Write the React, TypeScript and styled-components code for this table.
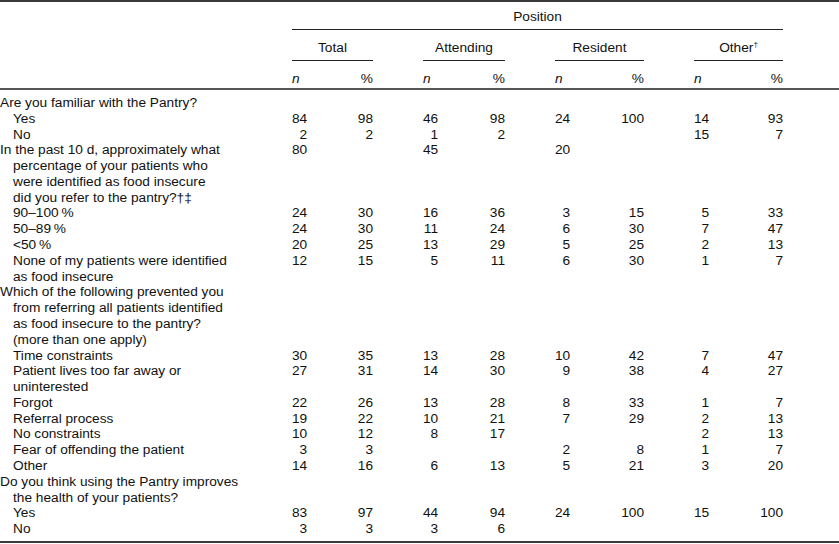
import React from "react";
import styled, { createGlobalStyle } from "styled-components";

const Global = createGlobalStyle`
  html, body { margin: 0; padding: 0; background: #fff; }
  body {
    font-family: "Liberation Sans", Arial, sans-serif;
    font-size: 13.7px;
    color: #111;
  }
`;

const COLS = "292px 81px 50px 82px 50px 89px 50px 89px 1fr";

const Table = styled.div`
  width: 839px;
  border-top: 2px solid #3a3a3a;
  border-bottom: 2px solid #3a3a3a;
  box-sizing: border-box;
`;

const Head = styled.div`
  border-bottom: 2px solid #555;
`;

const HeadRow = styled.div<{ $pt: number; $pb: number }>`
  display: grid;
  grid-template-columns: ${COLS};
  line-height: 16px;
  & > * {
    padding-top: ${(p) => p.$pt}px;
    padding-bottom: ${(p) => p.$pb}px;
  }
`;

const SpanCell = styled.div<{ $from: number; $to: number; $rule?: boolean }>`
  grid-column: ${(p) => p.$from} / ${(p) => p.$to};
  text-align: center;
  border-bottom: ${(p) => (p.$rule ? "1px solid #222" : "none")};
`;

const SubHead = styled.div`
  display: flex;
  justify-content: space-between;
`;

const Italic = styled.span`
  font-style: italic;
`;

const Sup = styled.sup`
  font-size: 8px;
  line-height: 0;
  vertical-align: 5px;
`;

const Body = styled.div`
  padding: 5px 0 4px;
`;

const Row = styled.div`
  display: grid;
  grid-template-columns: ${COLS};
  line-height: 15.78px;
`;

const Label = styled.div``;

const Line = styled.div<{ $indent: boolean }>`
  padding-left: ${(p) => (p.$indent ? 13 : 0)}px;
  white-space: nowrap;
`;

const Group = styled.div`
  display: grid;
  grid-template-columns: 15px 1fr;
`;

const Num = styled.div`
  text-align: right;
  white-space: nowrap;
`;

type V = [string, string];
type R = { kind: "q" | "s"; lines: string[]; v?: V[] };

const rows: R[] = [
  { kind: "q", lines: ["Are you familiar with the Pantry?"] },
  { kind: "s", lines: ["Yes"], v: [["84", "98"], ["46", "98"], ["24", "100"], ["14", "93"]] },
  { kind: "s", lines: ["No"], v: [["2", "2"], ["1", "2"], ["", ""], ["15", "7"]] },
  {
    kind: "q",
    lines: [
      "In the past 10 d, approximately what",
      "percentage of your patients who",
      "were identified as food insecure",
      "did you refer to the pantry?†‡",
    ],
    v: [["80", ""], ["45", ""], ["20", ""], ["", ""]],
  },
  { kind: "s", lines: ["90–100\u2009%"], v: [["24", "30"], ["16", "36"], ["3", "15"], ["5", "33"]] },
  { kind: "s", lines: ["50–89\u2009%"], v: [["24", "30"], ["11", "24"], ["6", "30"], ["7", "47"]] },
  { kind: "s", lines: ["<50\u2009%"], v: [["20", "25"], ["13", "29"], ["5", "25"], ["2", "13"]] },
  {
    kind: "s",
    lines: ["None of my patients were identified", "as food insecure"],
    v: [["12", "15"], ["5", "11"], ["6", "30"], ["1", "7"]],
  },
  {
    kind: "q",
    lines: [
      "Which of the following prevented you",
      "from referring all patients identified",
      "as food insecure to the pantry?",
      "(more than one apply)",
    ],
  },
  { kind: "s", lines: ["Time constraints"], v: [["30", "35"], ["13", "28"], ["10", "42"], ["7", "47"]] },
  {
    kind: "s",
    lines: ["Patient lives too far away or", "uninterested"],
    v: [["27", "31"], ["14", "30"], ["9", "38"], ["4", "27"]],
  },
  { kind: "s", lines: ["Forgot"], v: [["22", "26"], ["13", "28"], ["8", "33"], ["1", "7"]] },
  { kind: "s", lines: ["Referral process"], v: [["19", "22"], ["10", "21"], ["7", "29"], ["2", "13"]] },
  { kind: "s", lines: ["No constraints"], v: [["10", "12"], ["8", "17"], ["", ""], ["2", "13"]] },
  { kind: "s", lines: ["Fear of offending the patient"], v: [["3", "3"], ["", ""], ["2", "8"], ["1", "7"]] },
  { kind: "s", lines: ["Other"], v: [["14", "16"], ["6", "13"], ["5", "21"], ["3", "20"]] },
  {
    kind: "q",
    lines: ["Do you think using the Pantry improves", "the health of your patients?"],
  },
  { kind: "s", lines: ["Yes"], v: [["83", "97"], ["44", "94"], ["24", "100"], ["15", "100"]] },
  { kind: "s", lines: ["No"], v: [["3", "3"], ["3", "6"], ["", ""], ["", ""]] },
];

const groups: React.ReactNode[] = [
  "Total",
  "Attending",
  "Resident",
  <>
    Other<Sup>†</Sup>
  </>,
];

export default function App() {
  return (
    <>
      <Global />
      <Table>
        <Head>
          <HeadRow $pt={7} $pb={4}>
            <SpanCell $from={2} $to={9} $rule>
              Position
            </SpanCell>
          </HeadRow>
          <HeadRow $pt={10} $pb={4}>
            {groups.map((g, i) => (
              <SpanCell key={i} $from={2 + i * 2} $to={3 + i * 2} $rule>
                {g}
              </SpanCell>
            ))}
          </HeadRow>
          <HeadRow $pt={10} $pb={1}>
            {groups.map((_, i) => (
              <SpanCell key={i} $from={2 + i * 2} $to={3 + i * 2}>
                <SubHead>
                  <Italic>n</Italic>
                  <span>%</span>
                </SubHead>
              </SpanCell>
            ))}
          </HeadRow>
        </Head>
        <Body>
          {rows.map((r, ri) => (
            <Row key={ri}>
              <Label>
                {r.lines.map((l, li) => (
                  <Line key={li} $indent={r.kind === "s" || li > 0}>
                    {l}
                  </Line>
                ))}
              </Label>
              {[0, 1, 2, 3].map((gi) => (
                <React.Fragment key={gi}>
                  <Group>
                    <Num>{r.v ? r.v[gi][0] : ""}</Num>
                    <Num>{r.v ? r.v[gi][1] : ""}</Num>
                  </Group>
                  {gi < 3 && <div />}
                </React.Fragment>
              ))}
            </Row>
          ))}
        </Body>
      </Table>
    </>
  );
}
